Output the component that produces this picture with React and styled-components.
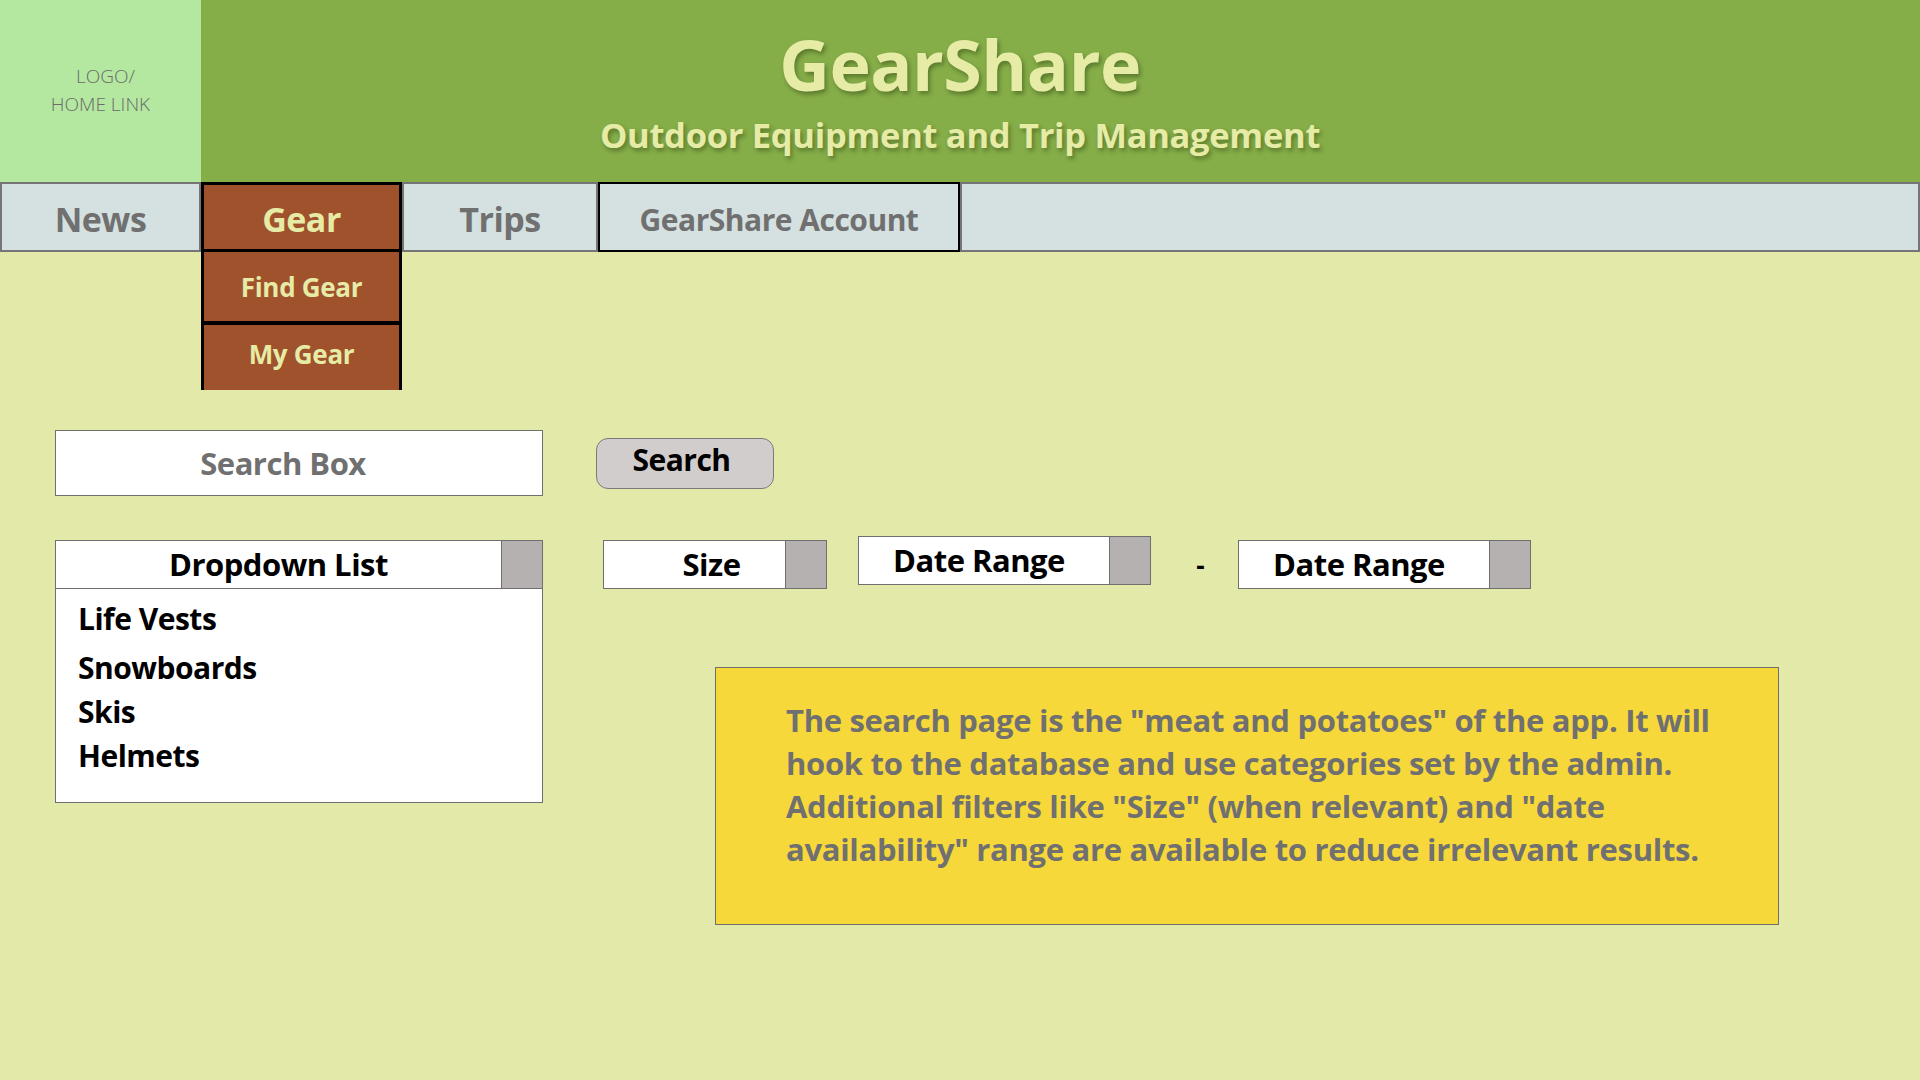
import styled, { createGlobalStyle } from 'styled-components';

const GlobalStyle = createGlobalStyle`
	html, body {
		margin: 0;
		padding: 0;
		background: #e3e9a9;
		font-family: 'Open Sans', 'Noto Sans', 'DejaVu Sans', sans-serif;
	}
	* {
		box-sizing: border-box;
	}
`;

const Page = styled.div`
	min-height: 1080px;
	background: #e3e9a9;
`;

const Header = styled.header`
	display: flex;
	height: 182px;
	background: #85ad48;
`;

const LogoLink = styled.a`
	width: 201px;
	flex-shrink: 0;
	display: flex;
	flex-direction: column;
	align-items: center;
	justify-content: center;
	padding: 0 0 2px 0;
	background: #b4e8a0;
	color: #6b6b6b;
	font-size: 19px;
	font-weight: 300;
	line-height: 28px;
	text-align: center;
	text-decoration: none;
`;

const TitleBlock = styled.div`
	flex: 1;
	display: flex;
	flex-direction: column;
	align-items: center;
	padding: 22px 201px 0 0;
	color: #e6eba6;
	text-shadow: 2px 3px 4px rgba(40, 60, 10, 0.45);
`;

const Title = styled.h1`
	margin: 0;
	font-size: 70px;
	font-weight: 700;
	line-height: 84px;
	letter-spacing: -0.5px;
`;

const Subtitle = styled.h2`
	margin: 7px 0 0;
	font-size: 34.5px;
	font-weight: 700;
	line-height: 44px;
	letter-spacing: -0.3px;
`;

const Nav = styled.nav`
	display: flex;
	height: 70px;
	background: #d5e1e0;
`;

const NavItem = styled.div`
	position: relative;
	width: ${(p) => p.$width};
	flex: ${(p) => (p.$grow ? 1 : 'none')};
	display: flex;
	align-items: center;
	justify-content: center;
	padding-top: 4px;
	background: ${(p) => (p.$active ? '#a0522d' : '#d5e1e0')};
	border: ${(p) =>
		p.$active ? '3px solid #000' : p.$outlined ? '2px solid #000' : '2px solid #757575'};
	color: ${(p) => (p.$active ? '#e6eba6' : '#707070')};
	font-size: ${(p) => p.$size || '34px'};
	font-weight: 700;
	letter-spacing: -0.5px;
	cursor: pointer;
`;

const SubMenu = styled.div`
	position: absolute;
	top: 100%;
	left: -3px;
	right: -3px;
	margin-top: 3px;
	display: flex;
	flex-direction: column;
	z-index: 2;
`;

const SubMenuItem = styled.div`
	flex-shrink: 0;
	height: ${(p) => (p.$last ? '65px' : '73px')};
	display: flex;
	align-items: center;
	justify-content: center;
	padding-bottom: ${(p) => (p.$last ? '8px' : '0')};
	background: #a0522d;
	border-left: 3px solid #000;
	border-right: 3px solid #000;
	border-bottom: ${(p) => (p.$last ? 'none' : '4px solid #000')};
	color: #e6eba6;
	font-size: 26px;
	font-weight: 700;
	letter-spacing: -0.3px;
`;

const Main = styled.main`
	padding: 178px 0 0 55px;
`;

const SearchRow = styled.div`
	display: flex;
	align-items: center;
	gap: 53px;
`;

const SearchBox = styled.div`
	width: 488px;
	height: 66px;
	display: flex;
	align-items: center;
	justify-content: center;
	padding-right: 32px;
	background: #fff;
	border: 1px solid #6f6f6f;
	color: #707070;
	font-size: 31px;
	font-weight: 700;
	letter-spacing: -0.5px;
`;

const SearchButton = styled.button`
	width: 178px;
	height: 51px;
	display: flex;
	align-items: center;
	justify-content: center;
	padding: 0 7px 7px 0;
	background: #d2cdcd;
	border: 1px solid #7a7a7a;
	border-radius: 12px;
	color: #000;
	font-family: inherit;
	font-size: 30px;
	font-weight: 700;
	letter-spacing: -0.5px;
`;

const FilterArea = styled.div`
	display: flex;
	margin-top: 44px;
`;

const DropdownList = styled.div`
	width: 488px;
	height: 263px;
	background: #fff;
	border: 1px solid #6f6f6f;
	display: flex;
	flex-direction: column;
`;

const DropdownHeader = styled.div`
	display: flex;
	height: 48px;
	border-bottom: 1px solid #6f6f6f;
`;

const FieldLabel = styled.div`
	flex: 1;
	display: flex;
	align-items: center;
	justify-content: center;
	padding-left: ${(p) => p.$left || '0'};
	padding-right: ${(p) => p.$right || '0'};
	padding-bottom: 2px;
	color: #000;
	font-size: 31px;
	font-weight: 700;
	letter-spacing: -0.5px;
	white-space: nowrap;
`;

const Handle = styled.div`
	width: 41px;
	flex-shrink: 0;
	background: #b5b1b0;
	border-left: 1px solid #6f6f6f;
`;

const ListItems = styled.ul`
	list-style: none;
	margin: 0;
	padding: 8px 0 0 22px;
`;

const ListItem = styled.li`
	height: 44px;
	line-height: 44px;
	color: #000;
	font-size: 30px;
	font-weight: 700;
	letter-spacing: -0.5px;

	&:first-child {
		margin-bottom: 5px;
	}
`;

const RightColumn = styled.div`
	display: flex;
	flex-direction: column;
	margin-left: 60px;
`;

const FilterRow = styled.div`
	display: flex;
	align-items: flex-start;
`;

const Field = styled.div`
	display: flex;
	width: ${(p) => p.$width};
	height: 49px;
	margin-top: ${(p) => p.$offset || '0'};
	margin-left: ${(p) => p.$gap || '0'};
	background: #fff;
	border: 1px solid #6f6f6f;
`;

const Dash = styled.div`
	width: 87px;
	height: 49px;
	display: flex;
	align-items: center;
	justify-content: center;
	padding-left: 12px;
	color: #000;
	font-size: 26px;
	font-weight: 700;
`;

const NoteBox = styled.div`
	width: 1064px;
	height: 258px;
	margin: 78px 0 0 112px;
	padding: 31px 30px 0 70px;
	background: #f7d83b;
	border: 1px solid #6f6f6f;
	color: #707070;
	font-size: 31px;
	font-weight: 700;
	line-height: 43px;
	letter-spacing: -0.3px;
	white-space: nowrap;
`;

const categories = ['Life Vests', 'Snowboards', 'Skis', 'Helmets'];

export default function App() {
	return (
		<Page>
			<GlobalStyle />
			<Header>
				<LogoLink href="#">
					<span>&nbsp;&nbsp;LOGO/</span>
					<span>HOME LINK</span>
				</LogoLink>
				<TitleBlock>
					<Title>GearShare</Title>
					<Subtitle>Outdoor Equipment and Trip Management</Subtitle>
				</TitleBlock>
			</Header>
			<Nav>
				<NavItem $width="201px">News</NavItem>
				<NavItem $width="201px" $active>
					Gear
					<SubMenu>
						<SubMenuItem>Find Gear</SubMenuItem>
						<SubMenuItem $last>My Gear</SubMenuItem>
					</SubMenu>
				</NavItem>
				<NavItem $width="196px">Trips</NavItem>
				<NavItem $width="362px" $outlined $size="30px">
					GearShare Account
				</NavItem>
				<NavItem $grow />
			</Nav>
			<Main>
				<SearchRow>
					<SearchBox>Search Box</SearchBox>
					<SearchButton>Search</SearchButton>
				</SearchRow>
				<FilterArea>
					<DropdownList>
						<DropdownHeader>
							<FieldLabel>Dropdown List</FieldLabel>
							<Handle />
						</DropdownHeader>
						<ListItems>
							{categories.map((c) => (
								<ListItem key={c}>{c}</ListItem>
							))}
						</ListItems>
					</DropdownList>
					<RightColumn>
						<FilterRow>
							<Field $width="224px">
								<FieldLabel $left="34px">Size</FieldLabel>
								<Handle />
							</Field>
							<Field $width="293px" $gap="31px" $offset="-4px">
								<FieldLabel $right="10px">Date Range</FieldLabel>
								<Handle />
							</Field>
							<Dash>-</Dash>
							<Field $width="293px">
								<FieldLabel $right="10px">Date Range</FieldLabel>
								<Handle />
							</Field>
						</FilterRow>
						<NoteBox>
							The search page is the "meat and potatoes" of the app. It will
							<br />
							hook to the database and use categories set by the admin.
							<br />
							Additional filters like "Size" (when relevant) and "date
							<br />
							availability" range are available to reduce irrelevant results.
						</NoteBox>
					</RightColumn>
				</FilterArea>
			</Main>
		</Page>
	);
}
